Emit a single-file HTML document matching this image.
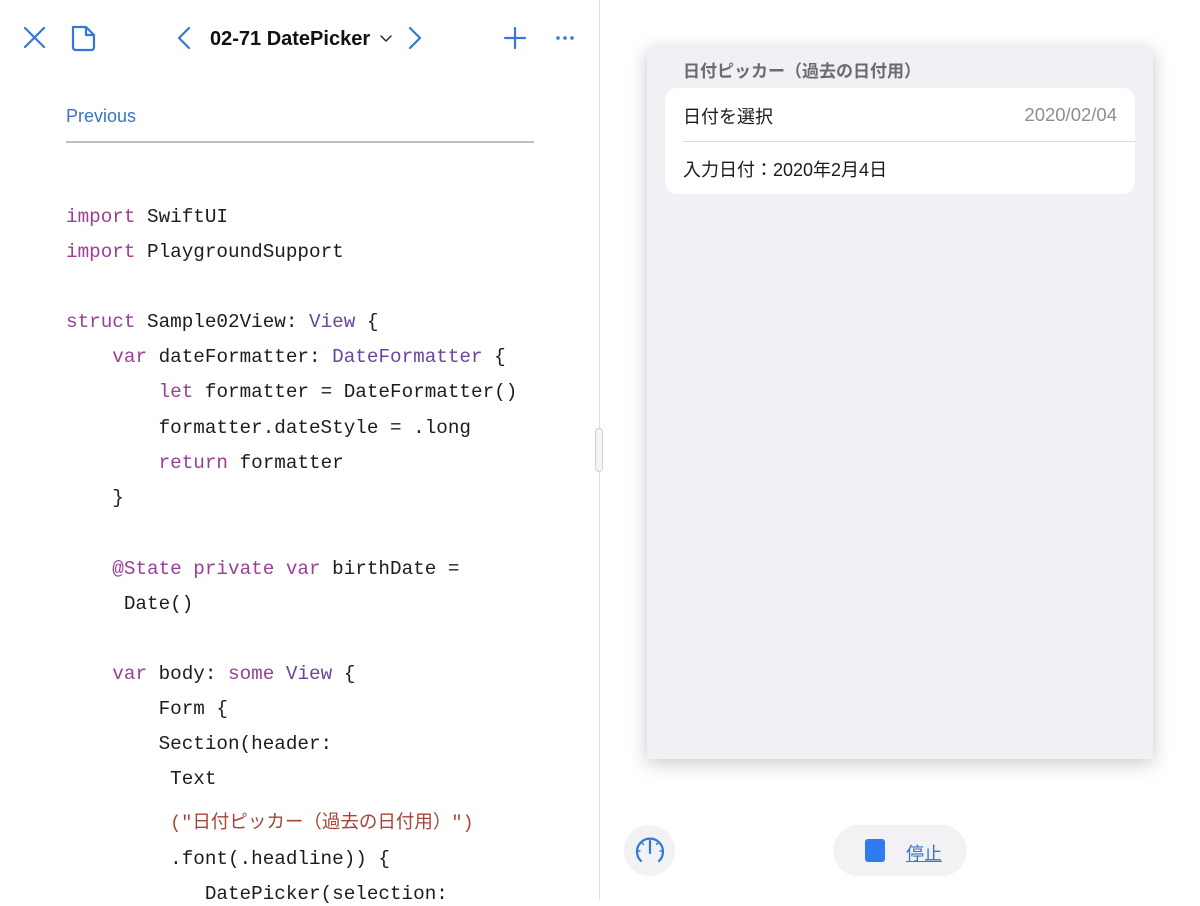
<!DOCTYPE html>
<html><head><meta charset="utf-8"><style>
*{margin:0;padding:0;box-sizing:border-box}
body{width:1200px;height:900px;background:#fff;position:relative;overflow:hidden;font-family:"Liberation Sans","Noto Sans CJK JP",sans-serif}
.l{position:absolute;font-family:"Liberation Mono","Noto Sans CJK JP",monospace;font-size:19.3px;color:#1c1c1c;white-space:pre;line-height:24px}
.k{color:#9a3f96}.t{color:#6a45a0}.s{color:#a8443a}
</style></head><body>
<svg style="position:absolute;left:0;top:0" width="600" height="60">
<g stroke="#3478d6" stroke-width="2.2" fill="none" stroke-linecap="round" stroke-linejoin="round">
<path d="M25 28 L44 47 M44 28 L25 47"/>
<path d="M73 27 H86 L94 35 V47 Q94 50 91 50 H76 Q73 50 73 47 Z M86 27 V35 H94"/>
<path d="M189 28 L179 38 L189 48"/>
<path d="M410 28 L420 38 L410 48"/>
<path d="M515 28 V48 M505 38 H525"/>
<path d="M381 36 L386 41 L391 36" stroke="#222" stroke-width="1.4"/>
</g>
<g fill="#3478d6"><circle cx="558" cy="38" r="1.8"/><circle cx="565" cy="38" r="1.8"/><circle cx="572" cy="38" r="1.8"/></g>
<text x="210" y="45" font-family="Liberation Sans" font-size="20" font-weight="bold" fill="#111">02-71 DatePicker</text>
</svg>
<div style="position:absolute;left:66px;top:106px;font-size:18px;color:#3a74c4">Previous</div>
<div style="position:absolute;left:66px;top:141px;width:468px;height:2px;background:#bdbdbd"></div>
<div class="l" style="left:66px;top:205px"><span class="k">import</span> SwiftUI</div>
<div class="l" style="left:66px;top:240px"><span class="k">import</span> PlaygroundSupport</div>
<div class="l" style="left:66px;top:310px"><span class="k">struct</span> Sample02View: <span class="t">View</span> {</div>
<div class="l" style="left:66px;top:345px">    <span class="k">var</span> dateFormatter: <span class="t">DateFormatter</span> {</div>
<div class="l" style="left:66px;top:380px">        <span class="k">let</span> formatter = DateFormatter()</div>
<div class="l" style="left:66px;top:416px">        formatter.dateStyle = .long</div>
<div class="l" style="left:66px;top:451px">        <span class="k">return</span> formatter</div>
<div class="l" style="left:66px;top:486px">    }</div>
<div class="l" style="left:66px;top:557px">    <span class="k">@State private var</span> birthDate =</div>
<div class="l" style="left:66px;top:592px">     Date()</div>
<div class="l" style="left:66px;top:662px">    <span class="k">var</span> body: <span class="k">some</span> <span class="t">View</span> {</div>
<div class="l" style="left:66px;top:697px">        Form {</div>
<div class="l" style="left:66px;top:732px">        Section(header:</div>
<div class="l" style="left:66px;top:767px">         Text</div>
<div class="l" style="left:66px;top:811px">         <span class="s" style="font-size:18.5px">("日付ピッカー（過去の日付用）")</span></div>
<div class="l" style="left:66px;top:847px">         .font(.headline)) {</div>
<div class="l" style="left:66px;top:882px">            DatePicker(selection:</div>
<div style="position:absolute;left:599px;top:0;width:1px;height:900px;background:#e0e0e0"></div>
<div style="position:absolute;left:595px;top:428px;width:8px;height:44px;border-radius:4px;background:#f4f4f4;border:1px solid #d0d0d0"></div>
<div style="position:absolute;left:647px;top:47px;width:506px;height:712px;background:#f0f0f5;box-shadow:0 4px 18px rgba(0,0,0,.22)">
 <div style="position:absolute;left:36px;top:10px;font-size:17px;font-weight:bold;color:#6a6a6f">日付ピッカー（過去の日付用）</div>
 <div style="position:absolute;left:18px;top:41px;width:470px;height:106px;background:#fff;border-radius:12px">
  <div style="position:absolute;left:18px;top:15px;font-size:18px;color:#1a1a1a">日付を選択</div>
  <div style="position:absolute;right:18px;top:16px;font-size:18.5px;color:#8e8e93">2020/02/04</div>
  <div style="position:absolute;left:18px;right:0;top:53px;height:1px;background:#dcdce0"></div>
  <div style="position:absolute;left:18px;top:68px;font-size:18px;color:#1a1a1a">入力日付：2020年2月4日</div>
 </div>
</div>
<div style="position:absolute;left:624px;top:825px;width:51px;height:51px;border-radius:50%;background:#f2f2f4"></div>
<svg style="position:absolute;left:624px;top:825px" width="51" height="51"><g stroke="#3478d6" stroke-width="2.2" fill="none" stroke-linecap="round"><path d="M17 36 A13 13 0 1 1 35 36"/><path d="M26 16 V28"/><path d="M14 26 H16 M36 26 H38 M18 18 L19.5 19.5 M34 18 L32.5 19.5" stroke-width="1.4"/></g></svg>
<div style="position:absolute;left:833px;top:825px;width:134px;height:51px;border-radius:26px;background:#f2f2f4"></div>
<div style="position:absolute;left:865px;top:839px;width:20px;height:23px;border-radius:3px;background:#2f7bf0"></div>
<div style="position:absolute;left:906px;top:840px;font-size:18px;color:#3a74c4;text-decoration:underline">停止</div>
</body></html>
